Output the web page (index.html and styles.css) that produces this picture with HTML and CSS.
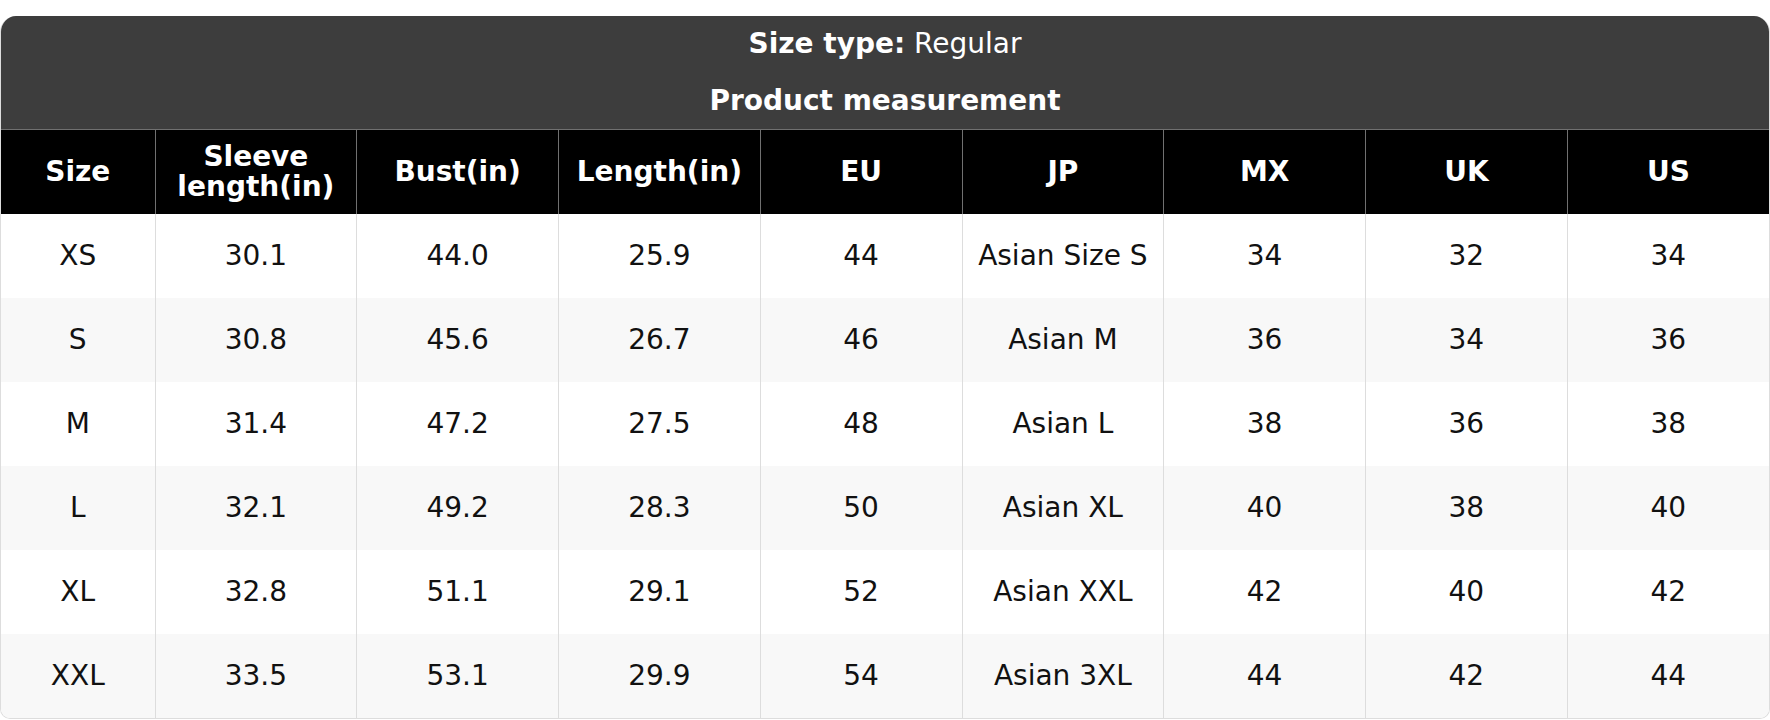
FILE: index.html
```html
<!DOCTYPE html>
<html lang="en">
<head>
<meta charset="utf-8">
<title>Size chart</title>
<link rel="stylesheet" href="styles.css">
</head>
<body>
<div class="chart">
  <div class="caption">
    <div class="caption-line"><b>Size type:</b> Regular</div>
    <div class="caption-line caption-sub"><b>Product measurement</b></div>
  </div>
  <table class="grid">
    <colgroup>
      <col class="col-first">
      <col><col><col><col><col><col><col><col>
    </colgroup>
    <thead>
      <tr>
        <th>Size</th>
        <th>Sleeve<br>length(in)</th>
        <th>Bust(in)</th>
        <th>Length(in)</th>
        <th>EU</th>
        <th>JP</th>
        <th>MX</th>
        <th>UK</th>
        <th>US</th>
      </tr>
    </thead>
    <tbody>
      <tr><td>XS</td><td>30.1</td><td>44.0</td><td>25.9</td><td>44</td><td>Asian Size S</td><td>34</td><td>32</td><td>34</td></tr>
      <tr><td>S</td><td>30.8</td><td>45.6</td><td>26.7</td><td>46</td><td>Asian M</td><td>36</td><td>34</td><td>36</td></tr>
      <tr><td>M</td><td>31.4</td><td>47.2</td><td>27.5</td><td>48</td><td>Asian L</td><td>38</td><td>36</td><td>38</td></tr>
      <tr><td>L</td><td>32.1</td><td>49.2</td><td>28.3</td><td>50</td><td>Asian XL</td><td>40</td><td>38</td><td>40</td></tr>
      <tr><td>XL</td><td>32.8</td><td>51.1</td><td>29.1</td><td>52</td><td>Asian XXL</td><td>42</td><td>40</td><td>42</td></tr>
      <tr><td>XXL</td><td>33.5</td><td>53.1</td><td>29.9</td><td>54</td><td>Asian 3XL</td><td>44</td><td>42</td><td>44</td></tr>
    </tbody>
  </table>
</div>
</body>
</html>
```
FILE: styles.css
```css
html, body {
  margin: 0;
  padding: 0;
  background: #ffffff;
}

body {
  font-family: "DejaVu Sans", "Verdana", sans-serif;
  color: #111111;
}

.chart {
  margin-top: 16px;
  width: 1770px;
  box-sizing: border-box;
  border: 1px solid #dddddd;
  border-top: 0;
  border-radius: 16px 16px 10px 10px;
  overflow: hidden;
}

.caption {
  background: #3d3d3d;
  color: #ffffff;
  text-align: center;
  font-size: 28px;
  padding-bottom: 1px;
  margin: 0 -1px;
}

.caption-line {
  height: 55px;
  line-height: 55px;
}

.caption-sub {
  margin-top: 2px;
}

.caption-line b {
  font-weight: bold;
}

.grid {
  width: 100%;
  border-collapse: collapse;
  table-layout: fixed;
  font-size: 28px;
}

.col-first {
  width: 154px;
}

.grid th {
  background: #000000;
  color: #ffffff;
  font-weight: bold;
  line-height: 30px;
  height: 84px;
  padding: 0 6px;
  text-align: center;
  vertical-align: middle;
  border-top: 1px solid #707070;
  border-left: 1px solid #707070;
  border-right: 1px solid #707070;
  border-bottom: 0;
}

.grid td {
  height: 84px;
  padding: 0 6px;
  text-align: center;
  vertical-align: middle;
  color: #111111;
  line-height: 28px;
  border-left: 1px solid #dddddd;
  border-right: 1px solid #dddddd;
  border-top: 0;
  border-bottom: 0;
  background: #ffffff;
}

.grid th:first-child,
.grid td:first-child {
  border-left: 0;
}

.grid th:last-child,
.grid td:last-child {
  border-right: 0;
}

.grid tbody tr:nth-child(even) td {
  background: #f8f8f8;
}
```
